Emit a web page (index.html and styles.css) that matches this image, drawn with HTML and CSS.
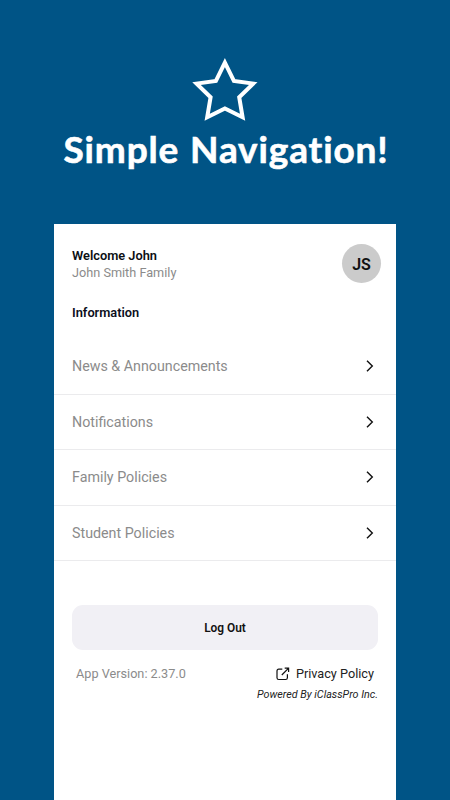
FILE: index.html
```html
<!DOCTYPE html>
<html lang="en">
<head>
    <meta charset="UTF-8">
    <meta name="viewport" content="width=device-width, initial-scale=1.0">
    <title>Simple Navigation</title>
    <link rel="stylesheet" href="styles.css">
</head>
<body>
    <div class="mainscreen">
        <svg class="star" viewBox="0 0 70 66" width="70" height="66">
            <path d="M34.9 6.6 L43.9 24.9 L63.2 27.6 L49.2 41.2 L52.6 61.3 L34.9 52.4 L17.2 61.3 L20.6 41.2 L6.6 27.6 L25.9 24.9 Z" />
        </svg>
        <h1>Simple Navigation!</h1>

        <div class="card">
            <div class="header">
                <div>
                    <p class="welcome">Welcome John</p>
                    <p class="family">John Smith Family</p>
                </div>
                <div class="avatar">JS</div>
            </div>

            <h2>Information</h2>
            <ul class="menu">
                <li>
                    <span>News &amp; Announcements</span>
                    <svg class="chevron" viewBox="0 0 8 12" width="8" height="12"><path d="M1 0.7 L6.3 6 L1 11.3" /></svg>
                </li>
                <li>
                    <span>Notifications</span>
                    <svg class="chevron" viewBox="0 0 8 12" width="8" height="12"><path d="M1 0.7 L6.3 6 L1 11.3" /></svg>
                </li>
                <li>
                    <span>Family Policies</span>
                    <svg class="chevron" viewBox="0 0 8 12" width="8" height="12"><path d="M1 0.7 L6.3 6 L1 11.3" /></svg>
                </li>
                <li>
                    <span>Student Policies</span>
                    <svg class="chevron" viewBox="0 0 8 12" width="8" height="12"><path d="M1 0.7 L6.3 6 L1 11.3" /></svg>
                </li>
            </ul>

            <button type="button" class="button">Log Out</button>

            <div class="footer">
                <span class="version">App Version: 2.37.0</span>
                <a class="privacy">
                    <svg class="external" viewBox="0 0 14 14" width="14" height="14">
                        <path d="M6.3 2.2 H2.8 Q1 2.2 1 4 V10.7 Q1 12.5 2.8 12.5 H9.6 Q11.4 12.5 11.4 10.7 V7.2 M5.8 8 L12.4 1.3 M8.7 1.1 H12.6 V5" />
                    </svg>
                    <span>Privacy Policy</span>
                </a>
            </div>
            <p class="powered">Powered By iClassPro Inc.</p>
        </div>
    </div>
</body>
</html>
```
FILE: styles.css
```css
* {
    box-sizing: border-box;
}

body {
    font-family: Roboto, sans-serif;
    margin: 0;
    background-color: #005486;
}

.mainscreen {
    height: 800px;
    display: flex;
    flex-direction: column;
    align-items: center;
    overflow: hidden;
    padding-top: 56px;
}

.star {
    flex: none;
    fill: none;
    stroke: white;
    stroke-width: 4;
}

h1 {
    font-family: Lato, sans-serif;
    font-size: 37px;
    font-weight: 700;
    line-height: 48px;
    letter-spacing: 0.85px;
    word-spacing: 1px;
    white-space: nowrap;
    color: white;
    margin: 3px 0 51px 2px;
    -webkit-text-stroke: 0.6px white;
}

.card {
    width: 342px;
    flex: 1;
    background: white;
}

p {
    margin: 0;
}

.header {
    display: flex;
    justify-content: space-between;
    align-items: center;
    padding: 20px 15px 0 18px;
}

.welcome {
    font-size: 12.8px;
    font-weight: 600;
    line-height: 17px;
    color: #0c0f14;
}

.family {
    font-size: 12.7px;
    line-height: 17px;
    color: #8b8b8b;
}

.avatar {
    width: 39px;
    height: 39px;
    border-radius: 50%;
    background: #cbcbcb;
    font-size: 16px;
    font-weight: 600;
    line-height: 41px;
    text-align: center;
    color: #111;
}

h2 {
    font-size: 12.8px;
    font-weight: 600;
    line-height: 18px;
    color: #0c0f1c;
    margin: 21px 18px 17px;
}

.menu {
    list-style: none;
    margin: 0;
    padding: 0;
}

.menu li {
    height: 55.6px;
    display: flex;
    justify-content: space-between;
    align-items: center;
    padding: 0 22px 0 18px;
    border-bottom: 1px solid #ebebed;
    font-size: 14.27px;
    color: #8b8b8b;
}

.chevron {
    fill: none;
    stroke: #111;
    stroke-width: 1.4;
}

.button {
    display: block;
    width: 306px;
    height: 45px;
    margin: 44px 18px 0;
    padding: 0;
    border: none;
    border-radius: 11px;
    background: #f1f0f5;
    font-family: Roboto, sans-serif;
    font-size: 11.9px;
    font-weight: 600;
    color: #111;
}

.footer {
    display: flex;
    justify-content: space-between;
    align-items: center;
    padding: 15px 22px 0;
    font-size: 12.7px;
    line-height: 18px;
}

.version {
    color: #8b8b8b;
}

.privacy {
    display: flex;
    align-items: center;
    gap: 6px;
    color: #222;
}

.external {
    fill: none;
    stroke: #111;
    stroke-width: 1.2;
}

.powered {
    margin: 4px 18px 0;
    text-align: right;
    font-size: 10.75px;
    font-style: italic;
    line-height: 15px;
    color: #222;
}
```
